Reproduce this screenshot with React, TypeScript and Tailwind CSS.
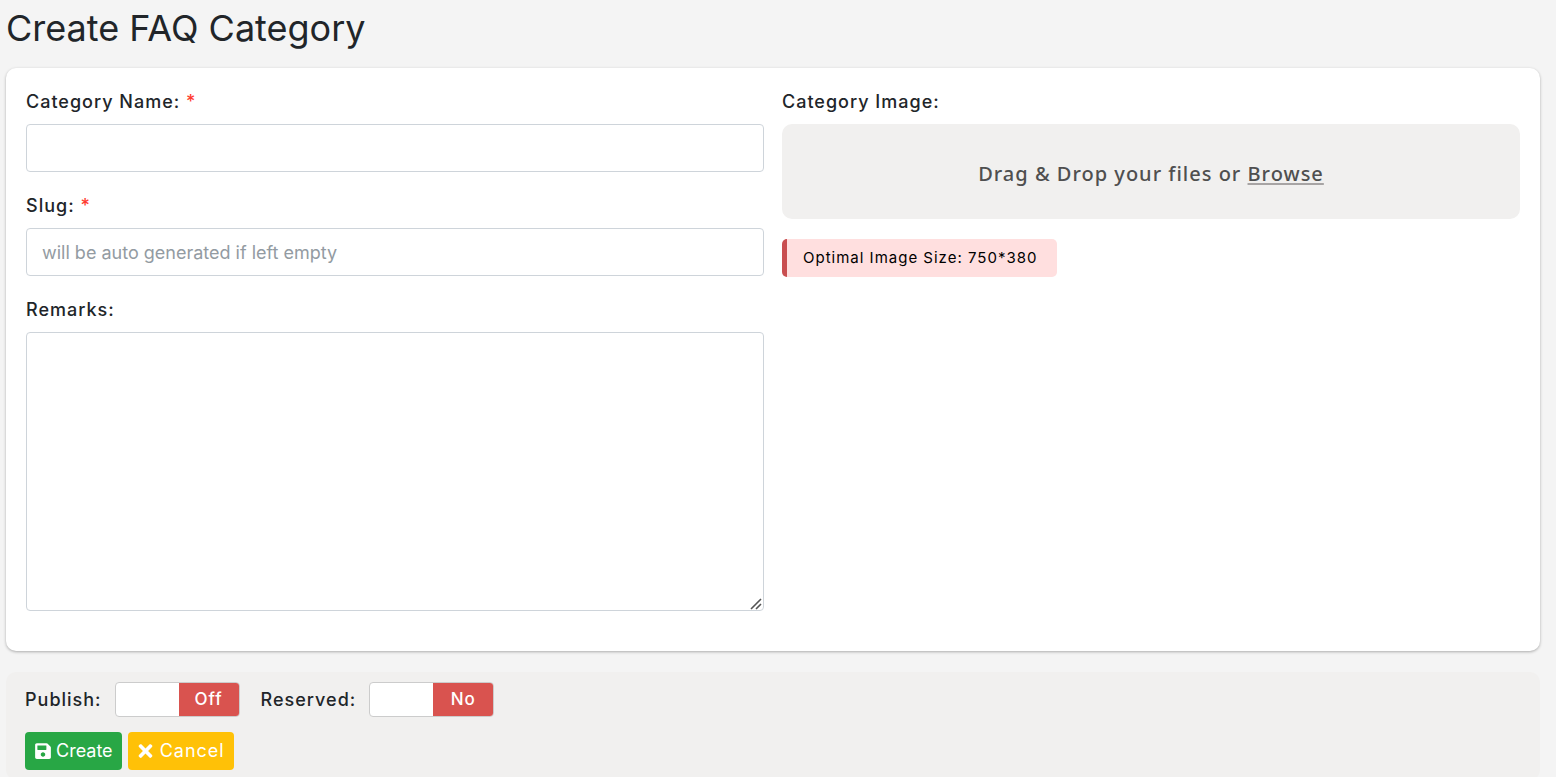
import { useState, type ReactNode } from "react";
import { FaSave, FaTimes } from "react-icons/fa";

const fieldClass =
  "block w-full rounded-[4px] border border-[#ced4da] bg-white px-[15px] text-lg text-[#495057] outline-none placeholder:text-[#939ba2] focus:border-[#80bdff]";

type FieldLabelProps = { htmlFor: string; required?: boolean; children: ReactNode };

function FieldLabel({ htmlFor, required, children }: FieldLabelProps) {
  return (
    <label htmlFor={htmlFor} className="mb-2 block text-lg leading-7 font-medium">
      {children}
      {required && <span className="text-[#ff3b30]"> *</span>}
    </label>
  );
}

type ToggleProps = { id: string; label: string; onText: string; offText: string };

function Toggle({ id, label, onText, offText }: ToggleProps) {
  const [checked, setChecked] = useState(false);
  const side = "flex h-full w-[60px] items-center justify-center text-[17px] font-medium text-white";
  return (
    <div className="flex items-center gap-[13px]">
      <label htmlFor={id} className="text-lg leading-7 font-medium">
        {label}
      </label>
      <label className="flex h-[35px] w-[125px] cursor-pointer overflow-hidden rounded-[4px] border border-[#cccccc] bg-white">
        <input
          id={id}
          type="checkbox"
          className="sr-only"
          checked={checked}
          onChange={(e) => setChecked(e.target.checked)}
        />
        {checked && <span className={`${side} bg-[#337ab7]`}>{onText}</span>}
        <span className="h-full flex-1" />
        {!checked && <span className={`${side} bg-[#d9534f]`}>{offText}</span>}
      </label>
    </div>
  );
}

export default function App() {
  return (
    <main className="h-screen overflow-hidden bg-[#f4f4f4] pr-4 pl-1.5 font-['Inter',sans-serif] tracking-[1px] text-[#212529]">
      <h1 className="pt-1.5 pb-[18px] text-4xl leading-[44px] font-normal tracking-normal">Create FAQ Category</h1>

      <form onSubmit={(e) => e.preventDefault()}>
        <div className="grid grid-cols-2 gap-x-[18px] rounded-[10px] bg-white px-5 pt-5 pb-10 shadow-[0_1px_3px_rgba(0,0,0,0.3)]">
          <div>
            <div className="mb-5">
              <FieldLabel htmlFor="name" required>
                Category Name:
              </FieldLabel>
              <input id="name" type="text" className={`${fieldClass} h-12`} />
            </div>
            <div className="mb-5">
              <FieldLabel htmlFor="slug" required>
                Slug:
              </FieldLabel>
              <input
                id="slug"
                type="text"
                placeholder="will be auto generated if left empty"
                className={`${fieldClass} h-12 tracking-normal`}
              />
            </div>
            <div>
              <FieldLabel htmlFor="remarks">Remarks:</FieldLabel>
              <div className="relative">
                <textarea id="remarks" className={`${fieldClass} h-[279px] resize-none py-2`} />
                <svg
                  className="pointer-events-none absolute right-0.5 bottom-px"
                  width="12"
                  height="12"
                  viewBox="0 0 12 12"
                  stroke="#555555"
                  strokeWidth="1.6"
                  aria-hidden
                >
                  <path d="M1 11L11 1M6 11L11 6" />
                </svg>
              </div>
            </div>
          </div>

          <div>
            <FieldLabel htmlFor="image">Category Image:</FieldLabel>
            <label
              htmlFor="image"
              className="mb-5 flex h-[95px] cursor-pointer items-center justify-center rounded-[10px] bg-[#f1f0ef] font-['Noto_Sans','Open_Sans',sans-serif] text-xl font-medium text-[#4f4f4f]"
            >
              <span className="pt-1">
                Drag &amp; Drop your files or{" "}
                <span className="underline decoration-[#a7a4a4] decoration-2 underline-offset-2">Browse</span>
              </span>
            </label>
            <input id="image" type="file" className="sr-only" />
            <p className="w-fit rounded-[5px] border-l-[5px] border-[#c94e50] bg-[#ffdfdf] py-2 pr-5 pl-4 text-[15px] leading-[22px] text-black">
              Optimal Image Size: 750*380
            </p>
          </div>
        </div>

        <div className="mt-[21px] rounded-[10px] bg-[#f1f0ef] px-[19px] py-2.5">
          <div className="mb-[15px] flex gap-[21px]">
            <Toggle id="publish" label="Publish:" onText="On" offText="Off" />
            <Toggle id="reserved" label="Reserved:" onText="Yes" offText="No" />
          </div>
          <div className="flex gap-1.5">
            <button
              type="submit"
              className="flex h-[38px] items-center gap-1 rounded-[4px] bg-[#28a745] px-[9px] text-lg tracking-normal text-white"
            >
              <FaSave size={18} aria-hidden />
              Create
            </button>
            <button
              type="button"
              className="flex h-[38px] items-center gap-1.5 rounded-[4px] bg-[#ffc107] px-[9px] text-lg text-white"
            >
              <FaTimes size={20} className="w-[17px]" aria-hidden />
              Cancel
            </button>
          </div>
        </div>
      </form>
    </main>
  );
}
